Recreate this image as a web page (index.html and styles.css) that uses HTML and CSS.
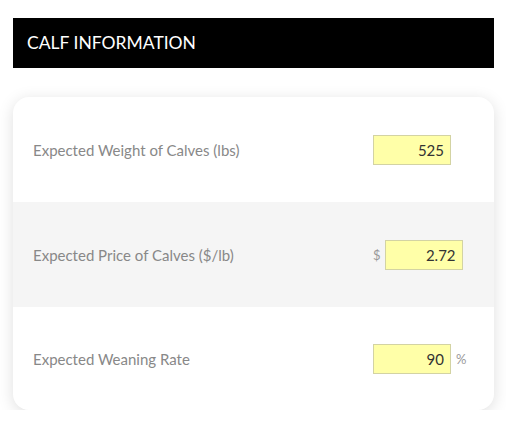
FILE: index.html
```html
<!DOCTYPE html>
<html lang="en">

<head>
  <meta charset="utf-8">
  <meta name="viewport" content="width=device-width, initial-scale=1.0">
  <title>Calf Information</title>
  <link rel="stylesheet" href="styles.css">
</head>

<body>
  <h2 class="section-title">CALF INFORMATION</h2>
  <div class="card">
    <div class="row">
      <label class="label" for="weight">Expected Weight of Calves (lbs)</label>
      <div class="field">
        <input type="text" id="weight" class="num" value="525">
      </div>
    </div>
    <div class="row alt">
      <label class="label" for="price">Expected Price of Calves ($/lb)</label>
      <div class="field">
        <span class="addon pre">$</span>
        <input type="text" id="price" class="num" value="2.72">
      </div>
    </div>
    <div class="row last">
      <label class="label" for="wean">Expected Weaning Rate</label>
      <div class="field">
        <input type="text" id="wean" class="num" value="90">
        <span class="addon post">%</span>
      </div>
    </div>
  </div>
</body>

</html>
```

FILE: styles.css
```css
body {
  margin: 0;
  padding: 18px 12px 0 13px;
  background-color: #fff;
  font-family: Lato, "Open Sans", sans-serif;
}

.section-title {
  margin: 0;
  height: 50px;
  padding-left: 14px;
  background-color: #000;
  color: #fff;
  font-size: 17.5px;
  font-weight: 400;
  line-height: 50px;
}

.card {
  margin-top: 29px;
  border-radius: 16px;
  background-color: #fff;
  box-shadow: 0 3px 16px rgba(0, 0, 0, 0.13);
  overflow: hidden;
}

.row {
  display: flex;
  align-items: center;
  height: 105px;
  padding-left: 20px;
}

.row.alt {
  background-color: #f5f5f5;
}

.row.last {
  height: 103px;
}

.label {
  flex: 1;
  color: #888;
  font-size: 15px;
}

.field {
  display: flex;
  align-items: center;
  width: 121px;
}

.num {
  box-sizing: border-box;
  width: 78px;
  height: 30px;
  padding: 0 6px 0 0;
  border: 1px solid #d3d3a3;
  background-color: #ffffa8;
  color: #333;
  font-family: inherit;
  font-size: 15px;
  text-align: right;
}

.addon {
  color: #999;
  font-size: 13px;
}

.addon.pre {
  margin-right: 4px;
}

.addon.post {
  margin-left: 5px;
}
```
